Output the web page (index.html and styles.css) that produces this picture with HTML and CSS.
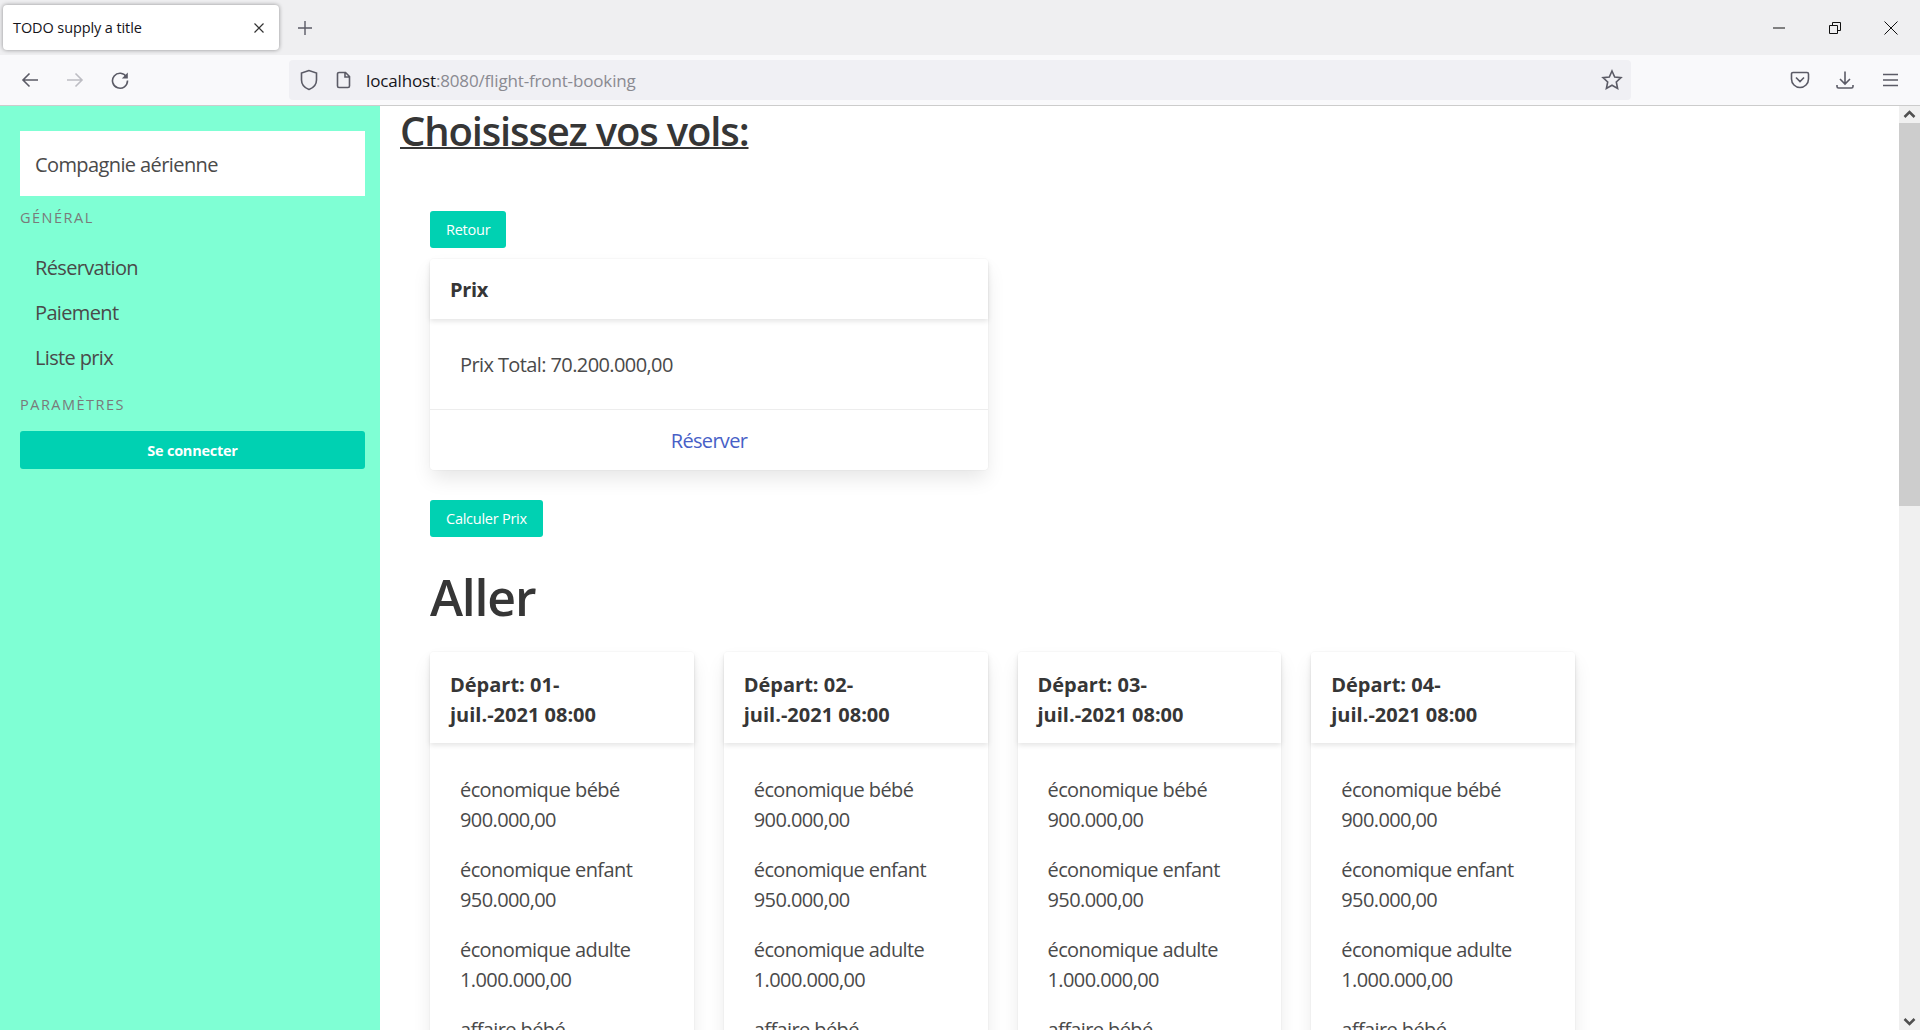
FILE: index.html
```html
<!DOCTYPE html>
<html>
  <head>
    <title>TODO supply a title</title>
    <link rel="stylesheet" href="styles.css">
  </head>
  <body>
    <div class="tabbar">
      <div class="tab">
        <span class="tab-title">TODO supply a title</span>
        <svg class="tab-close" width="12" height="12" viewBox="0 0 12 12"><path d="M1.5 1.5l9 9M10.5 1.5l-9 9"/></svg>
      </div>
      <svg class="new-tab" width="16" height="16" viewBox="0 0 16 16"><path d="M8 1v14M1 8h14"/></svg>
      <div class="window-btns">
        <svg width="14" height="14" viewBox="0 0 14 14"><path d="M1 7h12"/></svg>
        <svg width="14" height="14" viewBox="0 0 14 14"><path d="M1.5 4.5h8v8h-8zM4.5 4.5v-3h8v8h-3"/></svg>
        <svg width="14" height="14" viewBox="0 0 14 14"><path d="M.5.5l13 13M13.5.5l-13 13"/></svg>
      </div>
    </div>
    <div class="toolbar">
      <div class="nav-btns">
        <svg width="20" height="20" viewBox="0 0 20 20"><path d="M18 10H3M9.5 3.5L3 10l6.5 6.5"/></svg>
        <svg class="disabled" width="20" height="20" viewBox="0 0 20 20"><path d="M2 10h15M10.5 3.5L17 10l-6.5 6.5"/></svg>
        <svg width="20" height="20" viewBox="0 0 20 20"><path d="M16.5 7A7.5 7.5 0 1 0 17.5 10.500"/><path class="filled" d="M17.800 2.500v6h-6z"/></svg>
      </div>
      <div class="urlbar">
        <svg class="url-icon" width="20" height="22" viewBox="0 0 20 22"><path d="M10 1.500L2.500 4v7c0 4.500 3.500 8 7.500 9.500 4-1.500 7.500-5 7.500-9.500V4z"/></svg>
        <svg class="url-icon url-page" width="16" height="18" viewBox="0 0 16 18"><path d="M3 1.500h6.500l4 4V15a1.500 1.500 0 0 1-1.500 1.500H3A1.500 1.500 0 0 1 1.500 15V3A1.500 1.500 0 0 1 3 1.500zM9 1.500V6h4.500"/></svg>
        <span class="url-text"><span class="url-host">localhost</span>:8080/flight-front-booking</span>
        <svg class="url-star" width="22" height="22" viewBox="0 0 22 22"><path d="M11 2l2.700 6 6.300.7-4.700 4.300 1.300 6.500-5.600-3.300-5.600 3.300 1.300-6.500L2 8.700 8.300 8z"/></svg>
      </div>
      <div class="tool-btns">
        <svg width="20" height="20" viewBox="0 0 20 20"><path d="M3 2.500h14A1.500 1.500 0 0 1 18.500 4v5a8.500 8.500 0 0 1-17 0V4A1.500 1.500 0 0 1 3 2.500zM6 7.500l4 4 4-4"/></svg>
        <svg width="20" height="20" viewBox="0 0 20 20"><path d="M10 1.500v12M5 9l5 5 5-5M2 15v1.500a1.500 1.500 0 0 0 1.500 1.500h13a1.500 1.500 0 0 0 1.500-1.500V15"/></svg>
        <svg width="20" height="20" viewBox="0 0 20 20"><path d="M3 4.500h15M3 10h15M3 15.500h15"/></svg>
      </div>
    </div>
    <div class="viewport">
      <aside class="sidebar">
        <div class="brand">Compagnie aérienne</div>
        <p class="menu-label">Général</p>
        <ul class="menu-list">
          <li>Réservation</li>
          <li>Paiement</li>
          <li>Liste prix</li>
        </ul>
        <p class="menu-label">Paramètres</p>
        <a class="button button-full">Se connecter</a>
      </aside>
      <main class="content">
        <h2 class="page-title">Choisissez vos vols:</h2>
        <div class="section">
          <a class="button">Retour</a>
          <div class="card price-card">
            <div class="card-header">Prix</div>
            <div class="card-content">Prix Total: 70.200.000,00</div>
            <div class="card-footer">Réserver</div>
          </div>
          <a class="button">Calculer Prix</a>
          <h1 class="leg-title">Aller</h1>
          <div class="flights">
            <div class="card flight-card">
              <div class="card-header">Départ: 01-<br>juil.-2021 08:00</div>
              <div class="card-content">
                <p>économique bébé 900.000,00</p>
                <p>économique enfant 950.000,00</p>
                <p>économique adulte 1.000.000,00</p>
                <p>affaire bébé 1.200.000,00</p>
              </div>
            </div>
            <div class="card flight-card">
              <div class="card-header">Départ: 02-<br>juil.-2021 08:00</div>
              <div class="card-content">
                <p>économique bébé 900.000,00</p>
                <p>économique enfant 950.000,00</p>
                <p>économique adulte 1.000.000,00</p>
                <p>affaire bébé 1.200.000,00</p>
              </div>
            </div>
            <div class="card flight-card">
              <div class="card-header">Départ: 03-<br>juil.-2021 08:00</div>
              <div class="card-content">
                <p>économique bébé 900.000,00</p>
                <p>économique enfant 950.000,00</p>
                <p>économique adulte 1.000.000,00</p>
                <p>affaire bébé 1.200.000,00</p>
              </div>
            </div>
            <div class="card flight-card">
              <div class="card-header">Départ: 04-<br>juil.-2021 08:00</div>
              <div class="card-content">
                <p>économique bébé 900.000,00</p>
                <p>économique enfant 950.000,00</p>
                <p>économique adulte 1.000.000,00</p>
                <p>affaire bébé 1.200.000,00</p>
              </div>
            </div>
          </div>
        </div>
      </main>
      <div class="scrollbar">
        <svg width="21" height="17" viewBox="0 0 21 17"><path d="M5.500 11l5-5 5 5"/></svg>
        <div class="scroll-track"><div class="scroll-thumb"></div></div>
        <svg width="21" height="17" viewBox="0 0 21 17"><path d="M5.500 6l5 5 5-5"/></svg>
      </div>
    </div>
  </body>
</html>
```

FILE: styles.css
```css
html,
body {
  margin: 0;
  height: 100%;
  overflow: hidden;
}

body {
  display: flex;
  flex-direction: column;
  font-family: "Open Sans", "Noto Sans", sans-serif;
  font-size: 20px;
  line-height: 30px;
  color: #4a4a4a;
  background: #fff;
}

svg {
  display: block;
  fill: none;
  stroke: currentColor;
  stroke-width: 1.6;
}

svg .filled {
  fill: currentColor;
  stroke: none;
}

/* browser chrome */
.tabbar {
  height: 55px;
  flex: none;
  display: flex;
  align-items: center;
  background: #efeff1;
  padding: 0 0 0 3px;
  box-sizing: border-box;
}

.tab {
  width: 276px;
  height: 45px;
  box-sizing: border-box;
  display: flex;
  align-items: center;
  justify-content: space-between;
  padding: 0 14px 0 10px;
  background: #fff;
  border-radius: 4px;
  box-shadow: 0 0 4px rgba(0, 0, 0, 0.4);
}

.tab-title {
  font-size: 14.500px;
  letter-spacing: -0.1px;
  color: #15141a;
}

.tab-close {
  color: #333;
  stroke-width: 1.2;
}

.new-tab {
  margin-left: 18px;
  color: #5b5b66;
  stroke-width: 1.4;
}

.window-btns {
  margin-left: auto;
  display: flex;
  gap: 42px;
  padding-right: 22px;
  color: #111;
}

.window-btns svg {
  stroke-width: 1;
}

.toolbar {
  height: 51px;
  flex: none;
  box-sizing: border-box;
  display: flex;
  align-items: center;
  background: #f9f9fb;
  border-bottom: 1px solid #ccc;
  padding-left: 20px;
  color: #5b5b66;
}

.nav-btns {
  display: flex;
  gap: 25px;
  width: 269px;
}

.nav-btns .disabled {
  color: #bdbdc3;
}

.urlbar {
  width: 1342px;
  height: 40px;
  box-sizing: border-box;
  display: flex;
  align-items: center;
  padding: 0 4px 0 10px;
  background: #f0f0f4;
  border-radius: 4px;
}

.url-icon {
  margin-right: 17px;
}

.url-page {
  margin-right: 14px;
}

.url-text {
  padding-top: 2px;
  font-size: 17px;
  letter-spacing: -0.15px;
  color: #8a8a91;
}

.url-host {
  color: #15141a;
}

.url-star {
  margin-left: auto;
  margin-right: 4px;
}

.tool-btns {
  display: flex;
  gap: 25px;
  margin-left: 159px;
}

/* page */
.viewport {
  flex: 1;
  min-height: 0;
  display: flex;
}

.sidebar {
  width: 380px;
  flex: none;
  box-sizing: border-box;
  padding: 25px 15px 0 20px;
  background: #7fffd4;
}

.brand {
  height: 65px;
  box-sizing: border-box;
  padding: 19px 15px 0;
  background: #fff;
  letter-spacing: -0.6px;
}

.menu-label {
  margin: 7px 0 0;
  font-size: 14.500px;
  letter-spacing: 1.5px;
  line-height: 30px;
  text-transform: uppercase;
  color: #7a7a7a;
}

.menu-list {
  list-style: none;
  margin: 12px 0 10px;
  padding: 0;
}

.menu-list li {
  padding: 0 15px;
  height: 45px;
  line-height: 45px;
  letter-spacing: -0.65px;
}

.button {
  display: inline-block;
  height: 37px;
  box-sizing: border-box;
  padding: 0 16px;
  font-size: 14.500px;
  line-height: 37px;
  letter-spacing: -0.25px;
  color: #fff;
  background: #00d1b2;
  border-radius: 3px;
}

.button-full {
  display: block;
  height: 38px;
  line-height: 39px;
  margin-top: 11px;
  text-align: center;
  font-weight: 700;
}

.content {
  flex: 1;
  min-width: 0;
  margin-top: -2px;
  overflow: hidden;
  padding-left: 20px;
}

.page-title {
  margin: 0;
  font-size: 40px;
  font-weight: 600;
  line-height: 54px;
  letter-spacing: -1.15px;
  color: #363636;
  text-decoration: underline;
  text-decoration-thickness: 2px;
}

.section {
  padding: 53px 30px 0;
}

.card {
  background: #fff;
  border-radius: 4px;
  box-shadow: 0 10px 20px -2.500px rgba(10, 10, 10, 0.1), 0 0 0 1px rgba(10, 10, 10, 0.02);
}

.card-header {
  padding: 18px 20px 13px;
  font-weight: 700;
  letter-spacing: 0;
  color: #363636;
  box-shadow: 0 2.500px 5px rgba(10, 10, 10, 0.1);
}

.card-content {
  padding: 32px 30px 30px;
  letter-spacing: -0.6px;
}

.card-content p {
  margin: 0 0 20px;
}

.price-card {
  width: 558px;
  margin: 11px 0 30px;
}

.price-card .card-header {
  height: 60px;
  box-sizing: border-box;
  padding: 16px 20px;
  letter-spacing: -0.3px;
}

.price-card .card-content {
  padding: 31px 30px 29px;
}

.card-footer {
  height: 61px;
  box-sizing: border-box;
  border-top: 1px solid #ededed;
  line-height: 62px;
  text-align: center;
  letter-spacing: -0.7px;
  color: #485fc7;
}

.leg-title {
  margin: 30px 0 25px;
  font-size: 50px;
  font-weight: 600;
  line-height: 60px;
  letter-spacing: -1.2px;
  color: #363636;
}

.flights {
  display: flex;
  gap: 30px;
}

.flight-card {
  width: 263.750px;
}

/* scrollbar */
.scrollbar {
  width: 21px;
  flex: none;
  display: flex;
  flex-direction: column;
  background: #f0f0f0;
  color: #505050;
}

.scrollbar svg {
  stroke-width: 2.500;
}

.scroll-track {
  flex: 1;
}

.scroll-thumb {
  height: 383px;
  background: #cdcdcd;
}
```
